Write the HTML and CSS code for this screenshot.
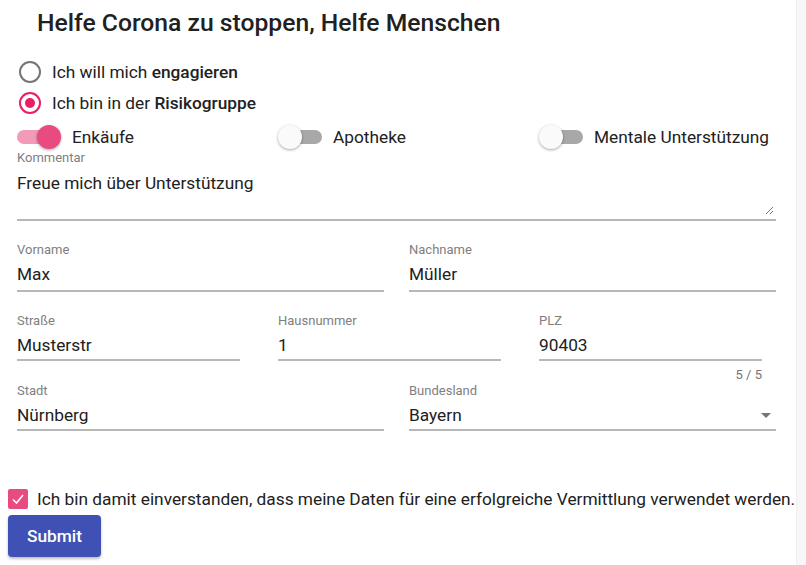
FILE: index.html
```html
<!DOCTYPE html>
<html lang="de">

<head>
  <meta charset='utf-8'>
  <title>Helfe Corona zu stoppen</title>
  <link rel="stylesheet" href="styles.css">
</head>

<body>
  <div class='page'>
    <div class='main'>
      <h1 class='title'>Helfe Corona zu stoppen, Helfe Menschen</h1>

      <div class='radios'>
        <div class='radio'>
          <span class='radio-icon'></span>
          <span>Ich will mich <b>engagieren</b></span>
        </div>
        <div class='radio radio-on'>
          <span class='radio-icon'></span>
          <span>Ich bin in der <b>Risikogruppe</b></span>
        </div>
      </div>

      <div class='switches'>
        <div class='switch switch-on'>
          <span class='sw'><span class='track'></span><span class='thumb'></span></span>
          <span>Enkäufe</span>
        </div>
        <div class='switch'>
          <span class='sw'><span class='track'></span><span class='thumb'></span></span>
          <span>Apotheke</span>
        </div>
        <div class='switch'>
          <span class='sw'><span class='track'></span><span class='thumb'></span></span>
          <span>Mentale Unterstützung</span>
        </div>
      </div>

      <div class='field field-area'>
        <div class='label'>Kommentar</div>
        <div class='value area'>
          Freue mich über Unterstützung
          <svg class='grip' width='10' height='10' viewBox='0 0 10 10'>
            <path d='M9 2 L2 9 M9 6 L6 9' stroke='#777' stroke-width='1' fill='none' />
          </svg>
        </div>
        <div class='details'></div>
      </div>

      <div class='row row2'>
        <div class='field'>
          <div class='label'>Vorname</div>
          <div class='value'>Max</div>
          <div class='details'></div>
        </div>
        <div class='field'>
          <div class='label'>Nachname</div>
          <div class='value'>Müller</div>
          <div class='details'></div>
        </div>
      </div>

      <div class='row row3'>
        <div class='field'>
          <div class='label'>Straße</div>
          <div class='value'>Musterstr</div>
          <div class='details'></div>
        </div>
        <div class='field'>
          <div class='label'>Hausnummer</div>
          <div class='value'>1</div>
          <div class='details'></div>
        </div>
        <div class='field'>
          <div class='label'>PLZ</div>
          <div class='value'>90403</div>
          <div class='details'><span class='counter'>5 / 5</span></div>
        </div>
      </div>

      <div class='row row2 row-last'>
        <div class='field'>
          <div class='label'>Stadt</div>
          <div class='value'>Nürnberg</div>
          <div class='details'></div>
        </div>
        <div class='field'>
          <div class='label'>Bundesland</div>
          <div class='value select'>Bayern <span class='arrow'></span></div>
          <div class='details'></div>
        </div>
      </div>

      <div class='agree'>
        <span class='checkbox'>
          <svg width='14' height='14' viewBox='0 0 14 14'>
            <path d='M2 7.5 L5.5 11 L12 3' stroke='#fff' stroke-width='1.6' fill='none' />
          </svg>
        </span>
        <span>Ich bin damit einverstanden, dass meine Daten für eine erfolgreiche Vermittlung verwendet werden.</span>
      </div>

      <button class='submit'>Submit</button>
    </div>
    <div class='side'></div>
  </div>
</body>

</html>
```

FILE: styles.css
```css
* {
  margin: 0;
  padding: 0;
  box-sizing: border-box;
}

body {
  font-family: Roboto, "Liberation Sans", sans-serif;
  color: #212121;
  background: #fff;
}

.page {
  display: flex;
  min-height: 565px;
}

.main {
  width: 796px;
  padding: 0 8px;
}

.side {
  flex: 1;
  background: #f7f7f7;
  border-left: 1px solid #efefef;
}

.title {
  margin: 7px 0 0 29px;
  font-size: 24.7px;
  line-height: 32px;
  font-weight: 500;
}

/* radios */
.radios {
  margin-top: 21px;
  padding-left: 11px;
}

.radio {
  display: flex;
  align-items: center;
  height: 24px;
  margin-bottom: 7px;
  font-size: 17.3px;
}

.radio b {
  font-weight: 500;
}

.radio-icon {
  flex-shrink: 0;
  width: 22px;
  height: 22px;
  border: 2px solid #757575;
  border-radius: 50%;
  margin-right: 11px;
  display: flex;
  align-items: center;
  justify-content: center;
}

.radio-on .radio-icon {
  border-color: #e91e63;
}

.radio-on .radio-icon::after {
  content: '';
  width: 10px;
  height: 10px;
  border-radius: 50%;
  background: #e91e63;
}

/* switches */
.switches {
  display: grid;
  grid-template-columns: repeat(3, 223px);
  column-gap: 38px;
  margin-top: 10px;
  padding-left: 9px;
}

.switch {
  display: flex;
  align-items: center;
  height: 24px;
  font-size: 17.3px;
  white-space: nowrap;
}

.sw {
  flex-shrink: 0;
  position: relative;
  width: 44px;
  height: 24px;
  margin-right: 11px;
}

.track {
  position: absolute;
  left: 4px;
  top: 5px;
  width: 40px;
  height: 14px;
  border-radius: 7px;
  background: #a8a8a8;
}

.thumb {
  position: absolute;
  left: 0;
  top: 0;
  width: 24px;
  height: 24px;
  border-radius: 50%;
  background: #fafafa;
  box-shadow: 0 1px 3px rgba(0, 0, 0, 0.35);
}

.switch-on .track {
  left: 0;
  background: #f29ab8;
}

.switch-on .thumb {
  left: 20px;
  background: #e94a80;
}

/* text fields */
.field-area {
  margin-left: 9px;
  width: 759px;
  margin-top: 1px;
}

.label {
  font-size: 13px;
  line-height: 16px;
  color: #808080;
}

.value {
  font-size: 17.3px;
  line-height: 24px;
  margin-top: 4px;
  padding-bottom: 4px;
  border-bottom: 2px solid #b8b8b8;
  color: #212121;
}

.area {
  position: relative;
  height: 50px;
  margin-top: 5px;
}

.grip {
  position: absolute;
  right: 2px;
  bottom: 4px;
}

.details {
  height: 20px;
  text-align: right;
  font-size: 13px;
  line-height: 12px;
  padding-top: 8px;
  color: #757575;
}

.row {
  display: grid;
  margin-left: 9px;
}

.row2 {
  width: 759px;
  grid-template-columns: 1fr 1fr;
  column-gap: 25px;
  margin-top: 1px;
}

.row3 {
  width: 745px;
  grid-template-columns: repeat(3, 1fr);
  column-gap: 38px;
  margin-top: 1px;
}

.row3 .value {
  padding-bottom: 2px;
}

.row-last {
  margin-top: 2px;
}

.row-last .value {
  padding-bottom: 2px;
}

.select {
  position: relative;
}

.arrow {
  position: absolute;
  right: 5px;
  top: 10px;
  border-left: 5px solid transparent;
  border-right: 5px solid transparent;
  border-top: 5px solid #757575;
}

/* agreement */
.agree {
  display: flex;
  align-items: center;
  height: 20px;
  margin-top: 38px;
  font-size: 17.3px;
  white-space: nowrap;
}

.checkbox {
  flex-shrink: 0;
  width: 20px;
  height: 20px;
  border-radius: 2px;
  background: #e94a80;
  margin-right: 9px;
  display: flex;
  align-items: center;
  justify-content: center;
}

.submit {
  margin-top: 6px;
  width: 93px;
  height: 42px;
  border: none;
  border-radius: 4px;
  background: #3f51b5;
  color: #fff;
  font-family: Roboto, "Liberation Sans", sans-serif;
  font-size: 17.3px;
  font-weight: 500;
  box-shadow: 0 2px 3px rgba(0, 0, 0, 0.25);
}
```
